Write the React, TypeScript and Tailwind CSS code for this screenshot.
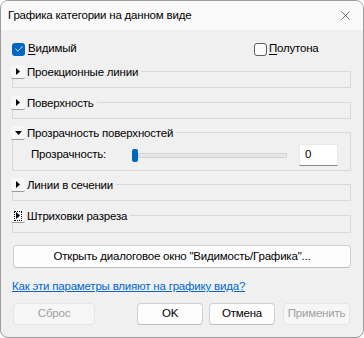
import React from "react"
import { X, Check } from "lucide-react"

const font = { fontFamily: '"Liberation Sans", Arial, sans-serif' }

function Toggle({ open, focused }: { open?: boolean; focused?: boolean }) {
  return (
    <span className="flex h-[14px] w-[14px] shrink-0 items-center justify-center rounded-[2px] border-b border-[#9a9a9a] bg-[#f7f7f7]">
      <span
        className={
          focused
            ? "flex h-[10px] w-[8px] items-center justify-center border border-dotted border-black"
            : "flex h-[10px] w-[8px] items-center justify-center"
        }
      >
        {open ? (
          <svg width="7" height="4" viewBox="0 0 7 4">
            <path d="M0 0h7L3.5 4z" fill="#000" />
          </svg>
        ) : (
          <svg width="4" height="7" viewBox="0 0 4 7">
            <path d="M0 0v7l4-3.5z" fill="#000" />
          </svg>
        )}
      </span>
    </span>
  )
}

function Section({
  label,
  open,
  focused,
  className,
  children,
}: {
  label: string
  open?: boolean
  focused?: boolean
  className: string
  children?: React.ReactNode
}) {
  return (
    <div className={`box-border border border-[#d9d9d9] ${className}`}>
      <div className="-ml-[2px] -mt-[7px] flex h-[14px] items-center">
        <Toggle open={open} focused={focused} />
        <span className="bg-[#f0f0f0] pl-[2px] pr-[3px] text-[11.5px] leading-[14px] tracking-[-0.2px] text-black">
          {label}
        </span>
      </div>
      {children}
    </div>
  )
}

function CheckBox({ checked }: { checked?: boolean }) {
  return checked ? (
    <span className="flex h-[13px] w-[13px] shrink-0 items-center justify-center rounded-[3px] bg-[#0067c0]">
      <Check className="h-[10px] w-[10px] text-white" strokeWidth={2} />
    </span>
  ) : (
    <span className="h-[13px] w-[13px] shrink-0 rounded-[3px] border border-[#5d5d5d] bg-[#fbfbfb]" />
  )
}

function Btn({
  children,
  disabled,
  className,
}: {
  children: React.ReactNode
  disabled?: boolean
  className: string
}) {
  return (
    <div
      className={
        disabled
          ? `flex h-[22px] items-center justify-center rounded-[4px] border border-[#e5e5e5] bg-[#f6f6f6] text-[11.5px] tracking-[-0.2px] text-[#a0a0a0] ${className}`
          : `flex h-[22px] items-center justify-center rounded-[4px] border border-[#d0d0d0] border-b-[#bdbdbd] bg-[#fdfdfd] text-[11.5px] tracking-[-0.2px] text-black ${className}`
      }
    >
      {children}
    </div>
  )
}

export default function App() {
  return (
    <div className="h-[338px] w-[364px] bg-white" style={font}>
      <div className="box-border flex h-[338px] w-[364px] flex-col overflow-hidden rounded-[8px] border border-[#9c9c9c] bg-[#f0f0f0]">
        <div className="flex h-[29px] shrink-0 items-center justify-between bg-[#f9f9f9] pl-[7px] pr-[10px]">
          <span className="text-[11.5px] tracking-[-0.2px] text-black">Графика категории на данном виде</span>
          <X className="h-[15px] w-[15px] text-[#222]" strokeWidth={1} />
        </div>

        <div className="flex flex-col pl-[11px] pr-[12px] text-[11.5px] tracking-[-0.2px]">
          <div className="mt-[12px] flex h-[14px] items-center text-black">
            <span className="flex w-[242px] items-center">
              <CheckBox checked />
              <span className="ml-[3px]">
                <span className="underline underline-offset-2">В</span>идимый
              </span>
            </span>
            <span className="flex items-center">
              <CheckBox />
              <span className="ml-[2px]">
                <span className="underline underline-offset-2">П</span>олутона
              </span>
            </span>
          </div>

          <Section label="Проекционные линии" className="mt-[15px] h-[17px]" />
          <Section label="Поверхность" className="mt-[14px] h-[17px]" />
          <Section label="Прозрачность поверхностей" open className="mt-[13px] h-[39px]">
            <div className="flex items-center pt-[4px]">
              <span className="ml-[18px] w-[101px] text-black">Прозрачность:</span>
              <div className="flex items-center">
                <span className="h-[13px] w-[6px] rounded-[2px] bg-[#0067c0]" />
                <span className="h-[5px] w-[149px] border border-[#d4d4d4] bg-[#e6e6e6]" />
              </div>
              <div className="ml-[12px] flex h-[22px] w-[39px] items-center border border-[#e8e8e8] border-b-[#8a8a8a] bg-white pl-[5px] text-black">
                0
              </div>
            </div>
          </Section>
          <Section label="Линии в сечении" className="mt-[13px] h-[17px]" />
          <Section label="Штриховки разреза" focused className="mt-[14px] h-[18px]" />

          <Btn className="mt-[12px] ml-[1px] h-[23px]">Открыть диалоговое окно "Видимость/Графика"...</Btn>

          <div className="mt-[10px] leading-[16px] text-[#0066cc] underline">
            Как эти параметры влияют на графику вида?
          </div>

          <div className="mt-[9px] flex items-center">
            <Btn disabled className="ml-[1px] w-[82px]">Сброс</Btn>
            <Btn className="ml-[42px] w-[66px]">OK</Btn>
            <Btn className="ml-[6px] w-[66px]">Отмена</Btn>
            <Btn disabled className="ml-[8px] w-[67px]">Применить</Btn>
          </div>
        </div>
      </div>
    </div>
  )
}
